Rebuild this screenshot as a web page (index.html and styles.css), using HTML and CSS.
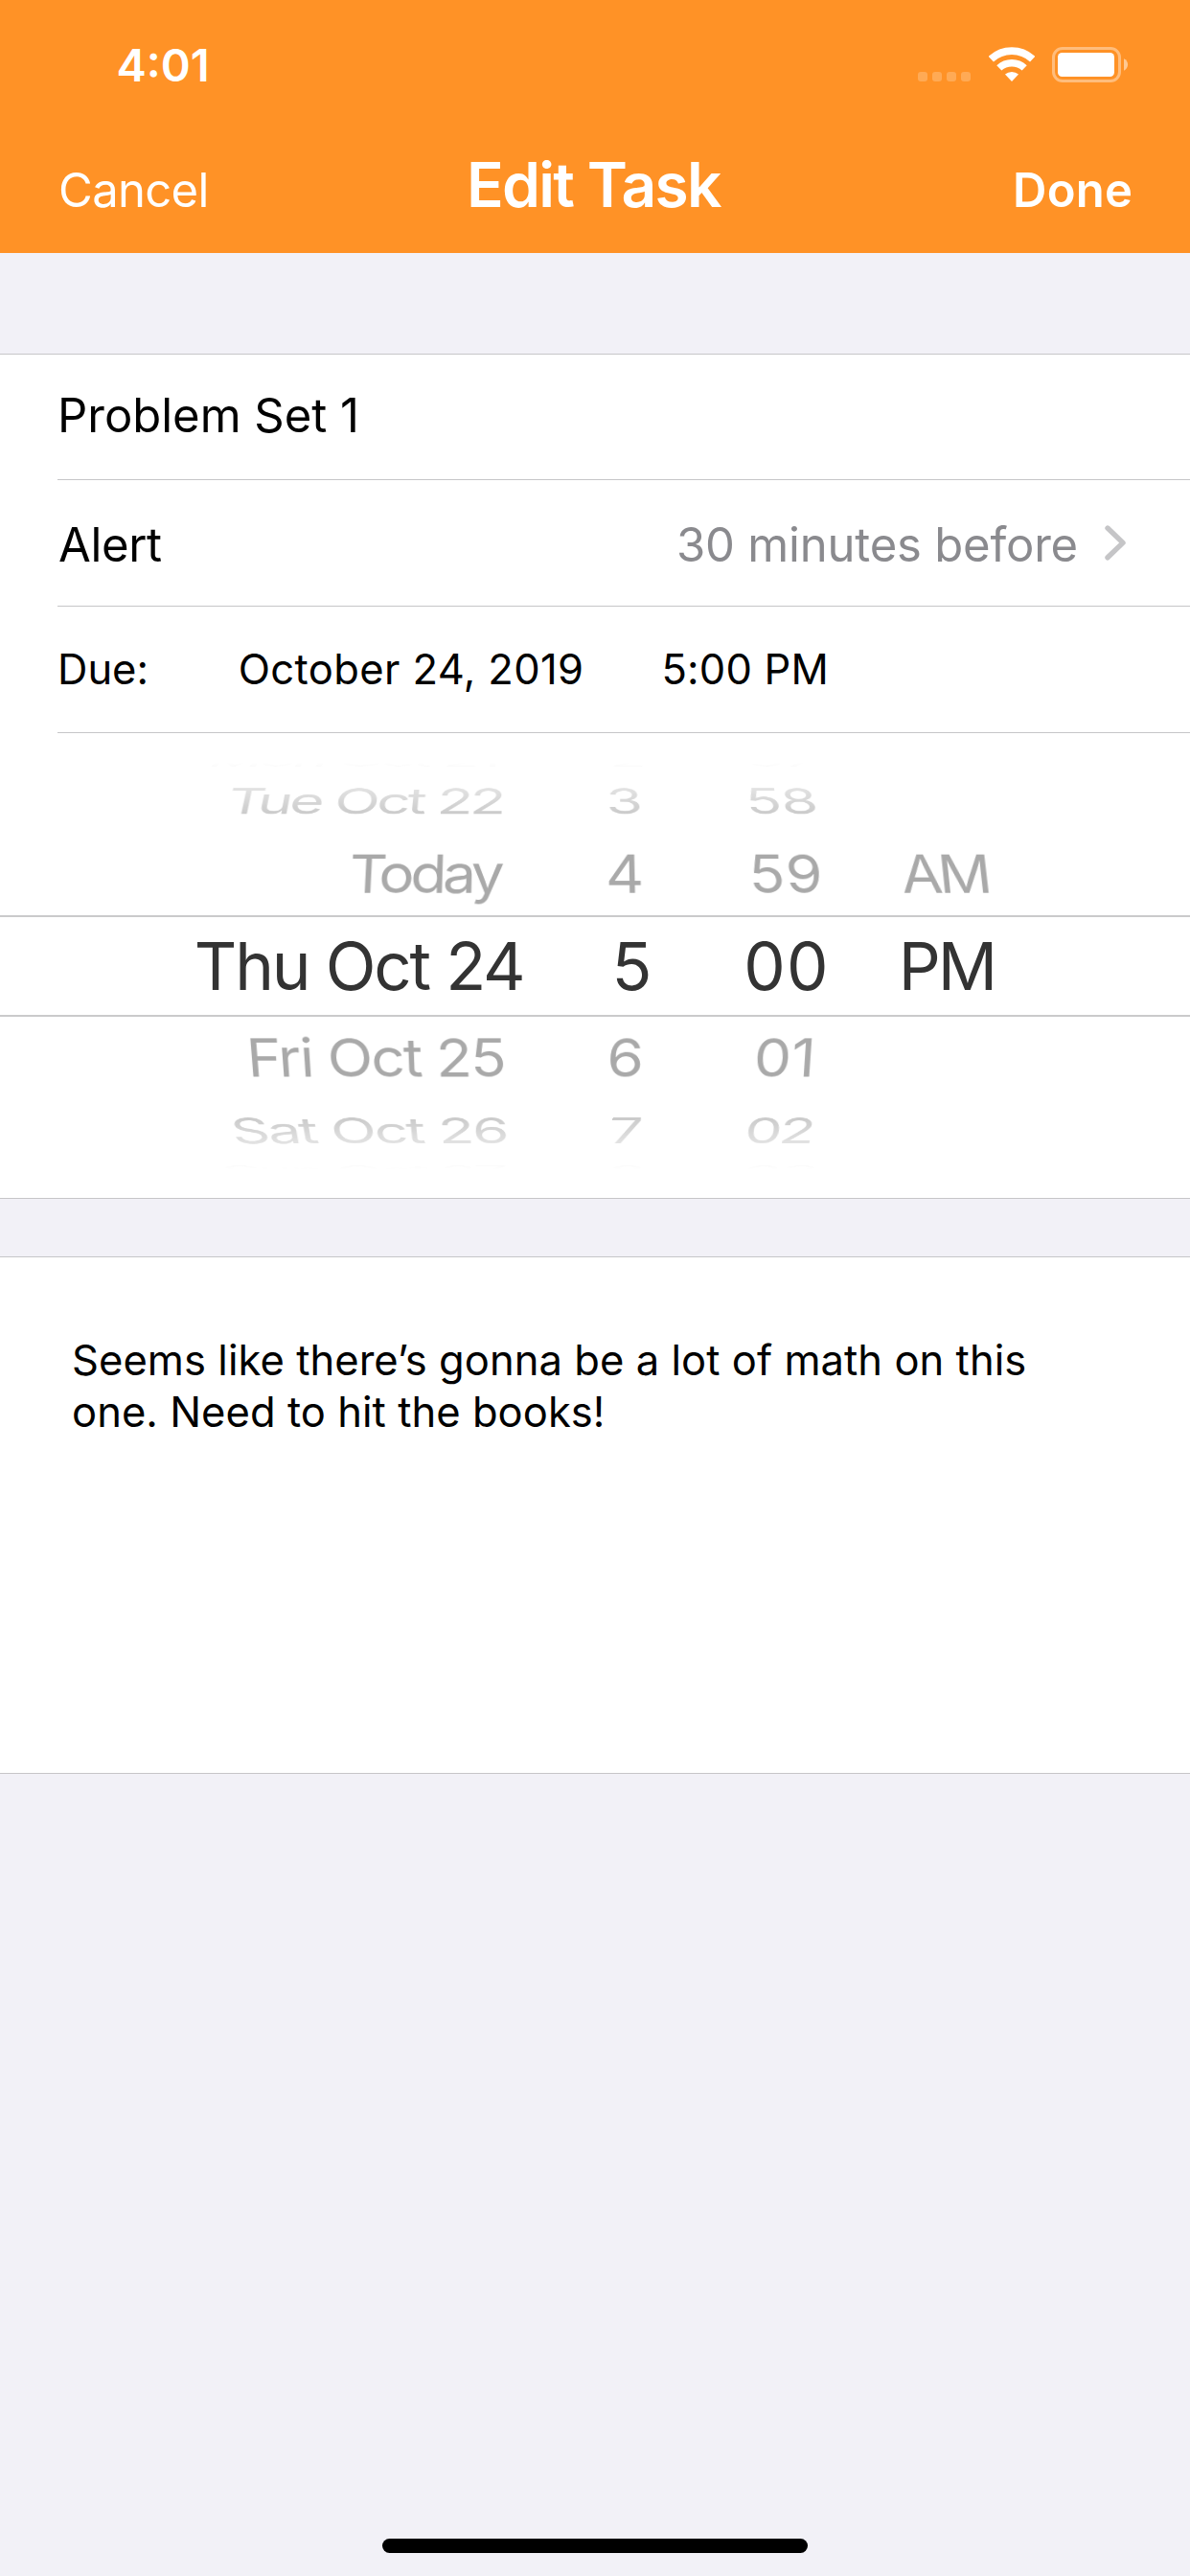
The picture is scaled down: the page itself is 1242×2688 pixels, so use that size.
FILE: index.html
```html
<!DOCTYPE html>
<html lang="en">
<head>
<meta charset="utf-8">
<title>Edit Task</title>
<link rel="stylesheet" href="styles.css">
</head>
<body>
<div class="screen">
  <header class="header">
    <div class="status">
      <span class="clock">4:01</span>
      <div class="indicators">
        <span class="signal"><i></i><i></i><i></i><i></i></span>
        <svg class="wifi" width="48" height="36" viewBox="0 0 48 36">
          <path d="M2.3 12.7A31.8 31.8 0 0 1 45.7 12.7" fill="none" stroke="#fff" stroke-width="7.8"/>
          <path d="M10.8 21.9A19.3 19.3 0 0 1 37.2 21.9" fill="none" stroke="#fff" stroke-width="7.4"/>
          <path d="M24 36L17 28.6A10.4 10.4 0 0 1 31 28.6Z" fill="#fff"/>
        </svg>
        <svg class="battery" width="80" height="37" viewBox="0 0 80 37">
          <rect x="1.5" y="1.5" width="69" height="34" rx="9.5" fill="none" stroke="#fff" stroke-opacity=".4" stroke-width="3"/>
          <rect x="6" y="6" width="59" height="25" rx="4.5" fill="#fff"/>
          <path d="M75 12.3C80.4 14.6 80.4 22.4 75 24.7Z" fill="#fff" fill-opacity=".5"/>
        </svg>
      </div>
    </div>
    <nav class="nav">
      <span class="cancel">Cancel</span>
      <span class="title">Edit Task</span>
      <span class="done">Done</span>
    </nav>
  </header>

  <section class="card form">
    <div class="row name"><span>Problem Set 1</span></div>
    <div class="row alert">
      <span class="label">Alert</span>
      <span class="value">30 minutes before</span>
      <svg class="chevron" width="22" height="37" viewBox="0 0 22 37">
        <path d="M3 3L19 18.4L3 33.8" fill="none" stroke="#c5c5c7" stroke-width="5.4" stroke-linecap="round" stroke-linejoin="round"/>
      </svg>
    </div>
    <div class="row due">
      <span>Due:</span>
      <span class="due-date">October 24, 2019</span>
      <span class="due-time">5:00 PM</span>
    </div>
    <div class="picker">
      <div class="wheel wheel-top">
        <div class="line far up mon"><span class="date">Mon Oct 21</span><span>2</span><span>57</span></div>
        <div class="line mid up tue"><span class="date">Tue Oct 22</span><span>3</span><span class="m58">58</span></div>
        <div class="line near up today"><span class="date">Today</span><span>4</span><span class="m59">59</span><span class="am">AM</span></div>
      </div>
      <div class="line selected"><span class="date">Thu Oct 24</span><span>5</span><span class="m00">00</span><span class="pm">PM</span></div>
      <div class="wheel wheel-bottom">
        <div class="line near down fri"><span class="date">Fri Oct 25</span><span>6</span><span>01</span></div>
        <div class="line mid down sat"><span class="date">Sat Oct 26</span><span>7</span><span class="m02">02</span></div>
        <div class="line far down sun"><span class="date">Sun Oct 27</span><span>8</span><span>03</span></div>
      </div>
    </div>
  </section>

  <section class="card notes">
    <p class="note">Seems like there’s gonna be a lot of math on this<br>one. Need to hit the books!</p>
  </section>

  <div class="home"></div>
</div>
</body>
</html>
```
FILE: styles.css
```css
* { box-sizing: border-box; }

body {
  margin: 0;
  background: #f2f1f7;
  color: #000;
  font-family: "Inter", "Liberation Sans", sans-serif;
}

.screen {
  width: 1242px;
  height: 2688px;
  display: flex;
  flex-direction: column;
  overflow: hidden;
}

/* Header */
.header {
  height: 264px;
  flex: none;
  background: #ff9226;
  color: #fff;
}

.status {
  height: 135px;
  display: flex;
  align-items: center;
  justify-content: space-between;
  padding: 0 64px 0 121.5px;
}

.clock { font-size: 47px; font-weight: 600; }

.indicators {
  display: flex;
  align-items: flex-end;
  height: 37px;
}

.signal {
  display: flex;
  gap: 5px;
  margin-right: 18.5px;
  padding-bottom: 1px;
}

.signal i {
  width: 10px;
  height: 10px;
  border-radius: 3px;
  background: rgba(255, 255, 255, .22);
}

.wifi { margin: 0 18.5px 1px 0; }

.nav {
  display: grid;
  grid-template-columns: 487px auto 1fr;
  align-items: baseline;
  padding-top: 18px;
  line-height: 80px;
  white-space: nowrap;
}

.cancel { padding-left: 61px; font-size: 49px; letter-spacing: -.66px; }
.title { font-size: 64px; font-weight: 600; letter-spacing: -1.7px; }
.done {
  padding-right: 59.7px;
  text-align: right;
  font-size: 49px;
  font-weight: 600;
  letter-spacing: .27px;
}

/* Cards */
.card {
  flex: none;
  background: #fff;
  border: solid #c6c6c8;
  border-width: 1px 0;
}

.form { margin-top: 105px; }

.row {
  height: 132px;
  margin-left: 60px;
  display: flex;
  align-items: center;
  border-bottom: 1px solid #c6c6c8;
  font-size: 49px;
  white-space: nowrap;
}

.name { height: 131px; padding-bottom: 4px; letter-spacing: -.02px; }
.alert { padding: 3px 67px 0 1px; }
.label { flex: 1; letter-spacing: -.36px; }
.value { color: #8a8a8e; letter-spacing: -.19px; }
.chevron { margin: -4px 0 0 28px; }
.due { padding-bottom: 1px; font-size: 43.5px; display: grid; grid-template-columns: 188.7px 441.8px 1fr; }
.due-date { letter-spacing: .39px; }
.due-time { letter-spacing: .19px; }

/* Date and time wheels */
.picker { height: 485px; padding-top: 28px; overflow: hidden; }

.wheel { color: #a9a9a9; }
.wheel-top {
  -webkit-mask-image: linear-gradient(to bottom, transparent 3px, rgba(0,0,0,.06) 7px, transparent 8px, transparent 26px, rgba(0,0,0,.3) 27px, rgba(0,0,0,.62) 57px, #000 90px);
  mask-image: linear-gradient(to bottom, transparent 3px, rgba(0,0,0,.06) 7px, transparent 8px, transparent 26px, rgba(0,0,0,.3) 27px, rgba(0,0,0,.62) 57px, #000 90px);
}
.wheel-bottom {
  -webkit-mask-image: linear-gradient(to top, transparent 3px, rgba(0,0,0,.06) 7px, transparent 8px, transparent 26px, rgba(0,0,0,.3) 27px, rgba(0,0,0,.62) 57px, #000 90px);
  mask-image: linear-gradient(to top, transparent 3px, rgba(0,0,0,.06) 7px, transparent 8px, transparent 26px, rgba(0,0,0,.3) 27px, rgba(0,0,0,.62) 57px, #000 90px);
}

.line {
  display: grid;
  grid-template-rows: 100%;
  align-items: center;
  font-size: 62px;
  line-height: 62px;
  white-space: nowrap;
  transform-origin: 580px 50%;
}

.date { text-align: right; }

.near { height: 86px; }
.mid { height: 66px; }
.far { height: 10px; }

.near.up { transform: perspective(2000px) rotateX(27deg); }
.mid.up { transform: perspective(2000px) rotateX(53deg); }
.far.up { transform: translateY(-3px) perspective(2000px) rotateX(78deg); }
.near.down { transform: perspective(2000px) rotateX(-27deg); }
.mid.down { transform: perspective(2000px) rotateX(-53deg); }
.far.down { transform: translateY(3px) perspective(2000px) rotateX(-78deg); }

.mon { grid-template-columns: 636px 143px 1fr; }
.mon .date { padding-right: 116px; letter-spacing: -3px; }

.tue { grid-template-columns: 632.5px 145.5px 1fr; }
.tue .date { padding-right: 107.6px; letter-spacing: -3.45px; }
.m58 { letter-spacing: -.7px; }

.today { grid-template-columns: 632px 149.5px 159px 1fr; }
.today .date { padding-right: 109.5px; letter-spacing: -4.2px; }
.m59 { letter-spacing: .8px; }
.am { letter-spacing: -4.28px; }

.selected {
  height: 106px;
  grid-template-columns: 638.5px 137.7px 161.6px 1fr;
  border: solid #cacacb;
  border-width: 2px 0;
  color: #333;
  font-size: 69px;
  line-height: 69px;
}
.selected .date { padding-right: 92px; letter-spacing: -2.16px; }
.m00 { letter-spacing: 1.4px; }
.pm { letter-spacing: -3.07px; }

.fri { grid-template-columns: 633.5px 153.5px 1fr; }
.fri .date { padding-right: 106.5px; letter-spacing: -1.8px; }

.sat { grid-template-columns: 636px 141.5px 1fr; }
.sat .date { padding-right: 106.7px; letter-spacing: -2.13px; }
.m02 { letter-spacing: -3.1px; }

.sun { grid-template-columns: 635px 141px 1fr; }
.sun .date { padding-right: 108px; letter-spacing: -3px; }

/* Notes */
.notes {
  height: 540px;
  margin-top: 60px;
  padding: 80px 75px 0;
}

.note {
  margin: 0;
  font-size: 43.5px;
  line-height: 54px;
  letter-spacing: .06px;
  white-space: nowrap;
}

.home {
  width: 444px;
  height: 15px;
  margin: auto auto 24px;
  border-radius: 8px;
  background: #000;
}
```
